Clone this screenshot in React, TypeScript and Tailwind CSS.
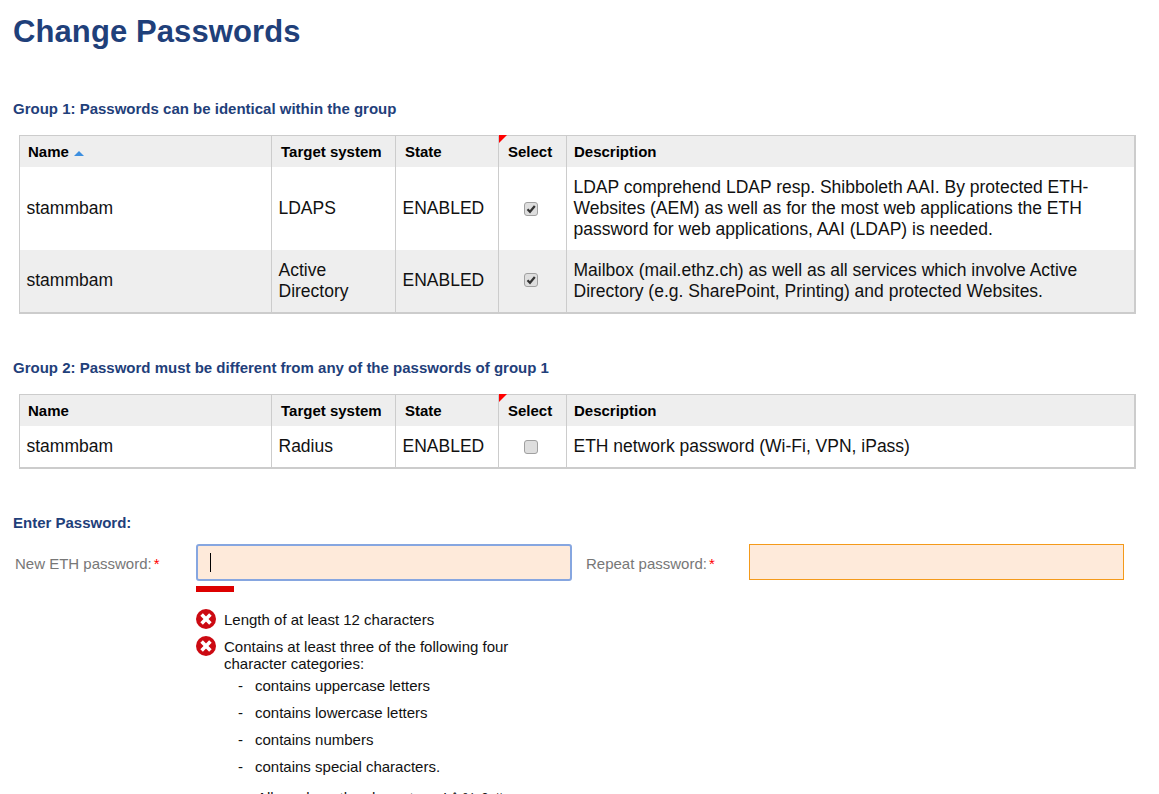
const font = "[font-family:'Liberation_Sans',Arial,sans-serif]";

type Row = { name: string; target: React.ReactNode; state: string; checked: boolean; desc: React.ReactNode; shade?: boolean; h: string };

function HeaderCell({ children, w, pad = "pl-[9px]" }: { children: React.ReactNode; w: string; pad?: string }) {
  return (
    <div className={`${w} ${pad} pt-[2px] shrink-0 flex items-center text-[15px] font-bold text-black border-r border-[#cccccc]`}>
      {children}
    </div>
  );
}

function Check({ checked }: { checked: boolean }) {
  return (
    <span className="w-[14px] h-[14px] rounded-[3px] border border-[#a0a0a0] bg-[#dedede] flex items-center justify-center">
      {checked && (
        <svg width="10" height="10" viewBox="0 0 10 10">
          <path d="M1.5 5.2 L4 7.8 L8.8 2" fill="none" stroke="#333333" strokeWidth="2.2" />
        </svg>
      )}
    </span>
  );
}

function DataTable({ rows, sorted }: { rows: Row[]; sorted?: boolean }) {
  return (
    <div className="ml-[19px] w-[1117px] border-t border-l border-r-2 border-b-2 border-[#cccccc]">
      <div className="flex h-[31px] bg-[#eeeeee]">
        <HeaderCell w="w-[252px]" pad="pl-[8px]">
          Name
          {sorted && <span className="ml-[5px] mt-[2px] w-0 h-0 border-x-[5px] border-x-transparent border-b-[5px] border-b-[#3d8fe0]" />}
        </HeaderCell>
        <HeaderCell w="w-[124px]">Target system</HeaderCell>
        <HeaderCell w="w-[103px]">State</HeaderCell>
        <div className="w-[68px] shrink-0 relative flex items-center pl-[9px] pt-[2px] text-[15px] font-bold text-black border-r border-[#cccccc]">
          Select
          <span className="absolute left-0 -top-px w-0 h-0 border-t-[8px] border-t-[#ff0000] border-r-[8px] border-r-transparent" />
        </div>
        <div className="flex-1 flex items-center pl-[7px] pt-[2px] text-[15px] font-bold text-black">Description</div>
      </div>
      {rows.map((r, i) => (
        <div key={i} className={`flex ${r.h} text-[17.5px] leading-[21px] text-[#111111] ${r.shade ? "bg-[#eeeeee]" : "bg-white"}`}>
          <div className={`w-[252px] shrink-0 flex items-center pl-[6.5px] border-r border-[#cccccc] ${r.shade ? "pb-[2px]" : ""}`}>{r.name}</div>
          <div className="w-[124px] shrink-0 flex items-center pl-[6.5px] border-r border-[#cccccc]">{r.target}</div>
          <div className={`w-[103px] shrink-0 flex items-center pl-[6.5px] border-r border-[#cccccc] ${r.shade ? "pb-[2px]" : ""}`}>{r.state}</div>
          <div className={`w-[68px] shrink-0 flex items-center pl-[25px] border-r border-[#cccccc] ${r.shade ? "pb-[2px]" : ""}`}><Check checked={r.checked} /></div>
          <div className="flex-1 flex items-center pl-[6.5px] pr-2">{r.desc}</div>
        </div>
      ))}
    </div>
  );
}

function ErrorIcon() {
  return (
    <svg width="20" height="20" viewBox="0 0 20 20" className="shrink-0">
      <circle cx="10" cy="10" r="10" fill="#cc0a12" />
      <path d="M5.6 5.6 L14.4 14.4 M14.4 5.6 L5.6 14.4" stroke="#ffffff" strokeWidth="3.6" />
    </svg>
  );
}

const Sub = ({ children }: { children: React.ReactNode }) => (
  <h2 className="ml-[13px] text-[15px] leading-[16px] font-bold text-[#1f407a]">{children}</h2>
);

export default function App() {
  return (
    <div className={`${font} h-[794px] overflow-hidden bg-white`}>
      <h1 className="pl-[13px] pt-[14px] text-[31px] leading-[35px] font-bold tracking-[0.1px] text-[#1f407a]">Change Passwords</h1>

      <div className="mt-[52px]"><Sub>Group 1: Passwords can be identical within the group</Sub></div>
      <div className="mt-[18px]">
        <DataTable
          sorted
          rows={[
            {
              name: "stammbam", target: "LDAPS", state: "ENABLED", checked: true, h: "h-[83px]",
              desc: <span>LDAP comprehend LDAP resp. Shibboleth AAI. By protected ETH-<br />Websites (AEM) as well as for the most web applications the ETH<br />password for web applications, AAI (LDAP) is needed.</span>,
            },
            {
              name: "stammbam", target: <span>Active<br />Directory</span>, state: "ENABLED", checked: true, shade: true, h: "h-[62px]",
              desc: <span>Mailbox (mail.ethz.ch) as well as all services which involve Active<br />Directory (e.g. SharePoint, Printing) and protected Websites.</span>,
            },
          ]}
        />
      </div>

      <div className="mt-[46px]"><Sub>Group 2: Password must be different from any of the passwords of group 1</Sub></div>
      <div className="mt-[18px]">
        <DataTable
          rows={[
            { name: "stammbam", target: "Radius", state: "ENABLED", checked: false, h: "h-[41px]", desc: "ETH network password (Wi-Fi, VPN, iPass)" },
          ]}
        />
      </div>

      <div className="mt-[46px]"><Sub>Enter Password:</Sub></div>

      <div className="mt-[13px] flex items-start">
        <div className="ml-[15px] w-[181px] h-[37px] pt-1 flex items-center text-[15px] text-[#777777]">
          New ETH password:<span className="ml-[2px] text-[#ff0000]">*</span>
        </div>
        <div className="w-[376px]">
          <div className="h-[37px] rounded-[3px] border-2 border-[#86a6e0] bg-[#feeada] flex items-center pl-[12px]">
            <span className="w-px h-[19px] bg-black" />
          </div>
          <div className="mt-[5px] w-[38px] h-[6px] bg-[#dd0000]" />
        </div>
        <div className="ml-[14px] w-[163px] h-[37px] pt-1 flex items-center text-[15px] text-[#777777]">
          Repeat password:<span className="ml-[2px] text-[#ff0000]">*</span>
        </div>
        <div className="w-[375px] h-[36px] border border-[#f49a1a] bg-[#feeada]" />
      </div>

      <div className="mt-[17px] ml-[196px] w-[330px] text-[15px] leading-[17px] text-[#111111]">
        <div className="flex gap-2 items-start h-[27px]">
          <ErrorIcon />
          <span className="pt-[2px]">Length of at least 12 characters</span>
        </div>
        <div className="flex gap-2 items-start">
          <ErrorIcon />
          <span className="pt-[2px]">Contains at least three of the following four character categories:</span>
        </div>
        <ul className="mt-[5px] ml-[42px] flex flex-col gap-[10px]">
          {["contains uppercase letters", "contains lowercase letters", "contains numbers", "contains special characters."].map((t) => (
            <li key={t} className="flex"><span className="w-[17px]">-</span>{t}</li>
          ))}
        </ul>
        {/* The reference cuts this line off at the page edge and only the tops of the glyphs show, so its wording is a guess. */}
        <p className="mt-[14px] ml-[61px] whitespace-nowrap">Allowed are the characters: ! ^ % &amp; #</p>
      </div>
    </div>
  );
}
